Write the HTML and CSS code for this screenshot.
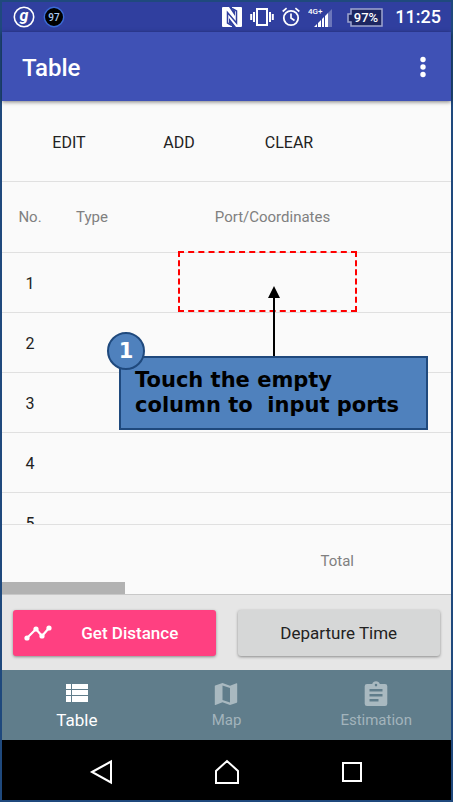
FILE: index.html
```html
<!DOCTYPE html>
<html lang="en">
<head>
<meta charset="utf-8">
<meta name="viewport" content="width=device-width, initial-scale=1">
<title>Table</title>
<link rel="stylesheet" href="styles.css">
</head>
<body>
<div class="phone">
  <div class="status">
    <svg width="22" height="22" viewBox="0 0 22 22"><circle cx="11" cy="11" r="9.7" fill="none" stroke="#fff" stroke-width="1.6"/><text x="11" y="15" class="status-g">g</text></svg>
    <svg class="status-level" width="22" height="22" viewBox="0 0 22 22"><circle cx="11" cy="11" r="9.7" fill="#000" stroke="#3b6bd6" stroke-width="1.4"/><text x="11" y="15" class="status-num">97</text></svg>
    <div class="status-right">
      <svg width="20" height="20" viewBox="0 0 20 20"><path fill="#fff" d="M1 0h6l6 9V4l-3-2V0h9a1 1 0 0 1 1 1v18a1 1 0 0 1-1 1h-5L7 11v5l3 2v2H1a1 1 0 0 1-1-1V1a1 1 0 0 1 1-1z"/><path fill="none" stroke="#303f9f" stroke-width="1.5" d="M10 18.500L5.500 16V5.500L14.500 16V4L10 1.500"/></svg>
      <svg width="24" height="20" viewBox="0 0 24 20"><path fill="none" stroke="#fff" stroke-width="2" d="M7 2h10v16H7zM4 5v10M20 5v10M1.200 7v6M22.800 7v6"/></svg>
      <svg width="18" height="20" viewBox="0 0 18 20"><circle cx="9" cy="11" r="7.200" fill="none" stroke="#fff" stroke-width="1.800"/><path fill="none" stroke="#fff" stroke-width="1.700" d="M9 6.500V11l3.500 2.500M.7 4.500L4.600 1.200M17.300 4.500l-3.900-3.300"/></svg>
      <svg width="26" height="22" viewBox="0 0 26 22"><text x="0" y="8" class="status-net">4G+</text><path fill="#fff" d="M6 21l3-3v3zM10 17l3-3v7h-3zM14 13l2-2v10h-2zM17 10l3-3v14h-3z"/><path fill="#6b76ba" d="M20 7l4-4v18h-4z"/></svg>
      <svg class="battery" width="36" height="19" viewBox="0 0 36 19"><path fill="#1d2661" stroke="#9fa6cf" stroke-width="1.500" d="M4 1h31v17H4v-4H1V6h3z"/><text x="19" y="14" class="status-battery">97%</text></svg>
      <span class="clock">11:25</span>
    </div>
  </div>

  <header class="appbar">
    <h1>Table</h1>
    <button class="more" type="button" aria-label="More options"><svg width="6" height="22" viewBox="0 0 6 22" fill="#fff"><circle cx="3" cy="3.500" r="2.700"/><circle cx="3" cy="11" r="2.700"/><circle cx="3" cy="18.500" r="2.700"/></svg></button>
  </header>

  <main class="content">
    <div class="toolbar">
      <button type="button">EDIT</button>
      <button type="button">ADD</button>
      <button type="button">CLEAR</button>
    </div>
    <div class="rows">
      <table>
        <colgroup><col class="col-no"><col class="col-type"><col></colgroup>
        <thead><tr><th>No.</th><th>Type</th><th>Port/Coordinates</th></tr></thead>
        <tbody>
          <tr><td>1</td><td></td><td></td></tr>
          <tr><td>2</td><td></td><td></td></tr>
          <tr><td>3</td><td></td><td></td></tr>
          <tr><td>4</td><td></td><td></td></tr>
          <tr><td>5</td><td></td><td></td></tr>
        </tbody>
      </table>
    </div>
    <div class="total"><span>Total</span><div class="thumb"></div></div>

    <div class="target"></div>
    <svg class="arrow" width="12" height="72" viewBox="0 0 12 72"><path d="M6 0l6 12H7v60H5V12H0z"/></svg>
    <div class="callout">
      <p>Touch the empty
column to  input ports</p>
      <span class="step">1</span>
    </div>
  </main>

  <div class="actions">
    <button class="primary" type="button"><svg width="28" height="16" viewBox="0 0 28 16"><path fill="none" stroke="#fff" stroke-width="2.200" d="M3 13l9-9 6 7 7-8"/><g fill="#fff"><circle cx="3" cy="13" r="2.600"/><circle cx="12" cy="4" r="2.600"/><circle cx="18" cy="11" r="2.600"/><circle cx="25" cy="3" r="2.600"/></g></svg><span>Get Distance</span></button>
    <button class="secondary" type="button">Departure Time</button>
  </div>

  <nav class="tabs">
    <a class="active" href="#table"><svg width="24" height="26" viewBox="0 0 24 26" fill="#fff"><path d="M1 3h5v5H1zM7 3h16v5H7zM1 9h5v5H1zM7 9h16v5H7zM1 15h5v6H1zM7 15h16v6H7z"/></svg><span>Table</span></a>
    <a href="#map"><svg width="24" height="26" viewBox="0 0 24 26"><path fill="#a9b9c0" fill-rule="evenodd" d="M22.500 2.200L16 4.700 8.500 2 1.200 4.400Q.8 4.600.8 5v18.500q0 .7.700.5L8.500 21.300 16 24l6.800-2.300q.4-.2.400-.6V2.700q0-.6-.7-.5zM16 21.500L8.500 19V4.500L16 7z"/></svg><span>Map</span></a>
    <a href="#estimation"><svg width="24" height="26" viewBox="0 0 24 26"><path fill="#a9b9c0" fill-rule="evenodd" d="M21 3h-5.200a4 4 0 0 0-7.600 0H3a2.300 2.300 0 0 0-2.300 2.300v17.400A2.300 2.300 0 0 0 3 25h18a2.300 2.300 0 0 0 2.300-2.300V5.300A2.300 2.300 0 0 0 21 3zM12 2.800a1.300 1.300 0 1 1 0 2.600 1.300 1.300 0 0 1 0-2.600zM5.500 8h13v2.500h-13zM5.500 13h13v2.500h-13zM5.500 18h9v2.500h-9z"/></svg><span>Estimation</span></a>
  </nav>

  <div class="system">
    <button type="button" aria-label="Back"><svg width="26" height="26" viewBox="0 0 26 26"><path d="M3 13L22 2.500v21z"/></svg></button>
    <button type="button" aria-label="Home"><svg width="26" height="26" viewBox="0 0 26 26"><path d="M2 24V12L13 2l11 10v12z"/></svg></button>
    <button type="button" aria-label="Recent apps"><svg width="26" height="26" viewBox="0 0 26 26"><path d="M4 4h18v18H4z"/></svg></button>
  </div>
</div>
</body>
</html>
```
FILE: styles.css
```css
* { box-sizing: border-box; }
body { margin: 0; font-family: Roboto, sans-serif; font-size: 16px; color: #222; }
button { margin: 0; padding: 0; border: 0; background: none; font: inherit; color: inherit; }
svg { display: block; flex: none; }

.phone {
  display: flex;
  flex-direction: column;
  height: 100vh;
  min-height: 640px;
  border: 2px solid #1f497d;
  background: #fafafa;
}

.status {
  display: flex;
  align-items: center;
  gap: 8px;
  height: 30px;
  padding: 0 10px 0 11px;
  background: #303f9f;
  color: #fff;
}
.status-right { display: flex; align-items: center; gap: 8px; margin-left: auto; }
.status-g { font: italic bold 16px Roboto, sans-serif; fill: #fff; text-anchor: middle; }
.status-num { font: 500 10px Roboto, sans-serif; fill: #a8c8f0; text-anchor: middle; }
.status-net { font: 500 8px Roboto, sans-serif; fill: #fff; }
.status-battery { font: 500 13px Roboto, sans-serif; fill: #fff; text-anchor: middle; }
.battery { margin-left: 5px; }
.clock { margin-left: 4px; font-size: 18px; font-weight: 500; line-height: 24px; }

.appbar {
  position: relative;
  display: flex;
  align-items: center;
  justify-content: space-between;
  height: 69px;
  padding: 0 17px 0 20px;
  background: #3f51b5;
  color: #fff;
  box-shadow: 0 1px 4px rgba(0, 0, 0, .5);
  z-index: 1;
}
.appbar h1 { margin: 0; padding-top: 2px; font-size: 24px; font-weight: 500; line-height: 32px; }
.more { padding: 8px; }

.content {
  position: relative;
  flex: 1;
  min-height: 0;
  display: flex;
  flex-direction: column;
}
.toolbar {
  display: grid;
  grid-template-columns: repeat(3, 110px);
  height: 81px;
  padding: 2px 0 0 12px;
  border-bottom: 1px solid #e0e0e0;
}
.rows { flex: 1; min-height: 0; overflow: hidden; }
table { width: 100%; border-collapse: separate; border-spacing: 0; table-layout: fixed; }
.col-no { width: 56px; }
.col-type { width: 68px; }
th, td { height: 60px; padding: 0; border-bottom: 1px solid #e0e0e0; text-align: center; font-weight: 400; }
td { padding-top: 2px; }
th { height: 71px; color: #808080; font-size: 15px; }
th:last-child { padding-right: 32px; }
.total {
  position: relative;
  display: flex;
  align-items: center;
  justify-content: flex-end;
  height: 71px;
  padding: 2px 97px 0 0;
  border-top: 1px solid #e0e0e0;
  border-bottom: 1px solid #c8c8c8;
  color: #808080;
  font-size: 15px;
}
.thumb { position: absolute; left: 0; bottom: 0; width: 123px; height: 12px; background: #b2b2b2; }

.target { position: absolute; left: 176px; top: 150px; width: 179px; height: 61px; border: 2px dashed #f00; }
.arrow { position: absolute; left: 266px; top: 185px; }
.callout {
  position: absolute;
  left: 117px;
  top: 255px;
  width: 309px;
  padding: 10px 14px;
  border: 2px solid #1f497d;
  background: #4f81bd;
  color: #000;
  font: bold 21px/25px "DejaVu Sans", sans-serif;
}
.callout p { margin: 0; white-space: pre; }
.step {
  position: absolute;
  left: -14px;
  top: -26px;
  width: 38px;
  height: 38px;
  border: 2px solid #1f497d;
  border-radius: 50%;
  background: #4f81bd;
  color: #fff;
  line-height: 34px;
  text-align: center;
}

.actions {
  display: grid;
  grid-template-columns: 1fr 1fr;
  gap: 22px;
  height: 75px;
  padding: 15px 11px 14px;
  background: #e6e6e6;
  font-size: 17px;
}
.actions button { border-radius: 3px; box-shadow: 0 1px 3px rgba(0, 0, 0, .4); }
.actions .primary { display: flex; align-items: center; padding-left: 11px; background: #ff4081; color: #fff; font-weight: 500; }
.primary span { flex: 1; text-align: center; padding-right: 8px; }
.actions .secondary { background: #d6d7d7; }

.tabs { display: grid; grid-template-columns: repeat(3, 1fr); height: 70px; background: #607d8b; }
.tabs a {
  display: flex;
  flex-direction: column;
  align-items: center;
  padding-top: 11px;
  color: #a3b4bc;
  font-size: 15px;
  line-height: 26px;
  text-decoration: none;
}
.tabs .active { color: #fff; font-size: 17px; }

.system {
  display: grid;
  grid-template-columns: repeat(3, 125px);
  justify-content: center;
  height: 60px;
  background: #000;
}
.system button { display: grid; place-items: center; padding-top: 4px; }
.system path { fill: none; stroke: #fff; stroke-width: 2; }
```
